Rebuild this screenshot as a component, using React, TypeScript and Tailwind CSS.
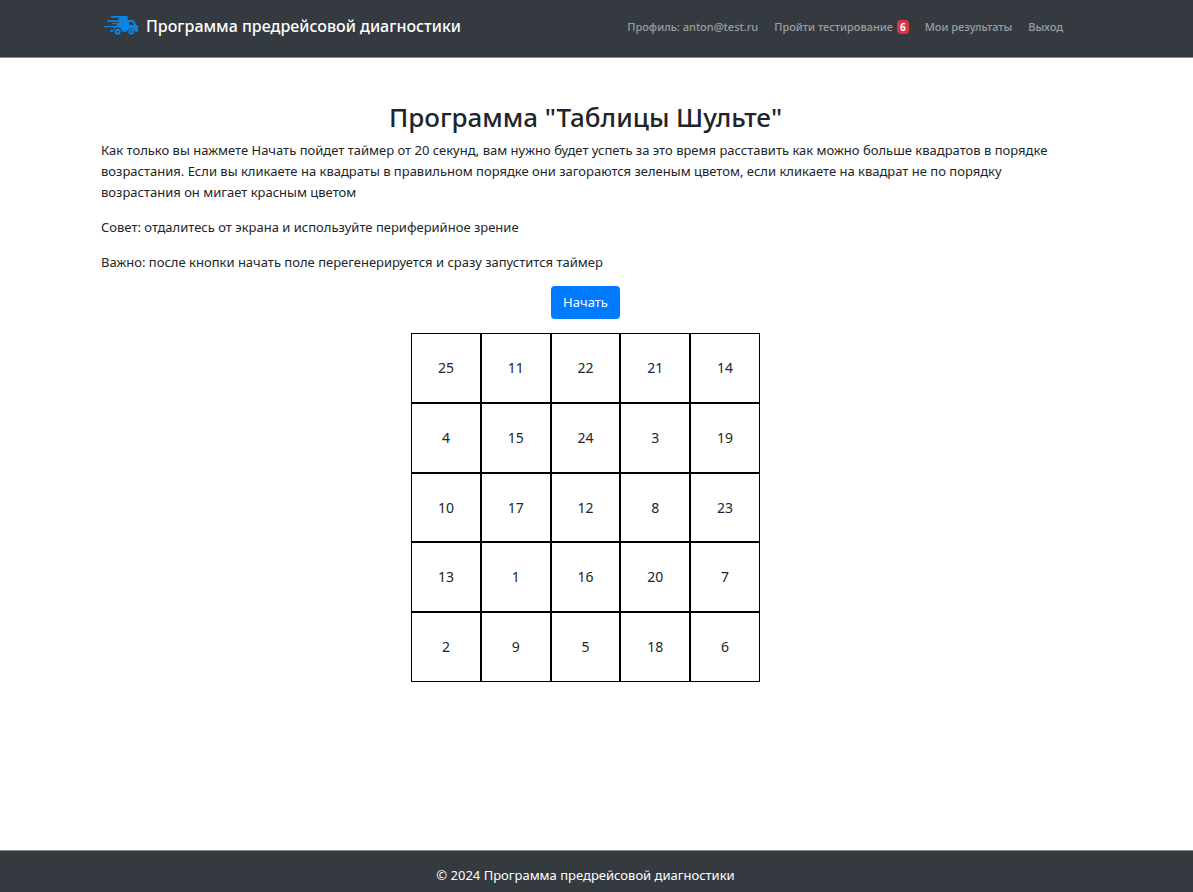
const cells = [
  25, 11, 22, 21, 14, 4, 15, 24, 3, 19, 10, 17, 12, 8, 23, 13, 1, 16, 20, 7, 2, 9, 5, 18, 6,
];

function VanLogo() {
  return (
    <svg viewBox="0 0 102 57" className="h-[19px] w-[34px] shrink-0" fill="#0984e3" aria-hidden="true">
      <path d="M21 0H71V12H85Q89 12 91 16L96 26L102 30V47H94A13 13 0 0 0 69 47H54A13 13 0 0 0 28 47H18V42H27L31 34H0V30H38V25H25V21H44V18H10V13H44V5H21Z" />
      <path d="M76 17H82Q85 17 86 19L90 27H76Z" fill="#343a40" />
      <path fillRule="evenodd" d="M41 38A9 9 0 1 1 41 56A9 9 0 1 1 41 38ZM41 44A3 3 0 1 0 41 50A3 3 0 1 0 41 44Z" />
      <path fillRule="evenodd" d="M82 38A9 9 0 1 1 82 56A9 9 0 1 1 82 38ZM82 44A3 3 0 1 0 82 50A3 3 0 1 0 82 44Z" />
    </svg>
  );
}

export default function App() {
  return (
    <div className="flex min-h-screen flex-col bg-white font-['Noto_Sans','Open_Sans',sans-serif] text-[13px]/[21px] text-[#212529]">
      <header className="border-b border-[#85898d] bg-[#343a40] pr-[123px] pl-[104px]">
        <div className="flex h-[57px] items-center justify-between pb-1.5">
          <a href="#" className="flex items-center gap-2 text-base/6 font-medium text-white">
            <VanLogo />
            Программа предрейсовой диагностики
          </a>
          <nav className="flex gap-4 pt-0.5 pr-[7px] text-[11px]/5 font-medium text-white/50">
            <a href="#profile">Профиль: anton@test.ru</a>
            <a href="#tests" className="flex items-center gap-1">
              Пройти тестирование
              <span className="rounded bg-[#dc3545] px-[3px] text-[10px]/[14px] font-bold text-white">6</span>
            </a>
            <a href="#results">Мои результаты</a>
            <a href="#logout">Выход</a>
          </nav>
        </div>
      </header>

      <main className="flex-1 pt-[42px] pr-[123px] pb-10 pl-[101px]">
        <h1 className="mb-1.5 text-center text-[26px]/[34px] font-medium">Программа "Таблицы Шульте"</h1>
        <div className="space-y-3.5">
          <p>
            Как только вы нажмете Начать пойдет таймер от 20 секунд, вам нужно будет успеть за это время
            расставить как можно больше квадратов в порядке возрастания. Если вы кликаете на квадраты в
            правильном порядке они загораются зеленым цветом, если кликаете на квадрат не по порядку
            возрастания он мигает красным цветом
          </p>
          <p>Совет: отдалитесь от экрана и используйте периферийное зрение</p>
          <p>Важно: после кнопки начать поле перегенерируется и сразу запустится таймер</p>
        </div>
        <div className="mt-[13px] flex flex-col items-center gap-3.5">
          <button type="button" className="rounded bg-[#007bff] px-3 py-1.5 text-white">
            Начать
          </button>
          <div className="grid w-[349px] grid-cols-5 text-sm">
            {cells.map((n) => (
              <button key={n} type="button" className="aspect-square border border-black">
                {n}
              </button>
            ))}
          </div>
        </div>
      </main>

      <footer className="border-t border-[#85898d] bg-[#343a40] pt-3.5 pr-[123px] pb-1.5 pl-[101px] text-center text-white">
        © 2024 Программа предрейсовой диагностики
      </footer>
    </div>
  );
}
